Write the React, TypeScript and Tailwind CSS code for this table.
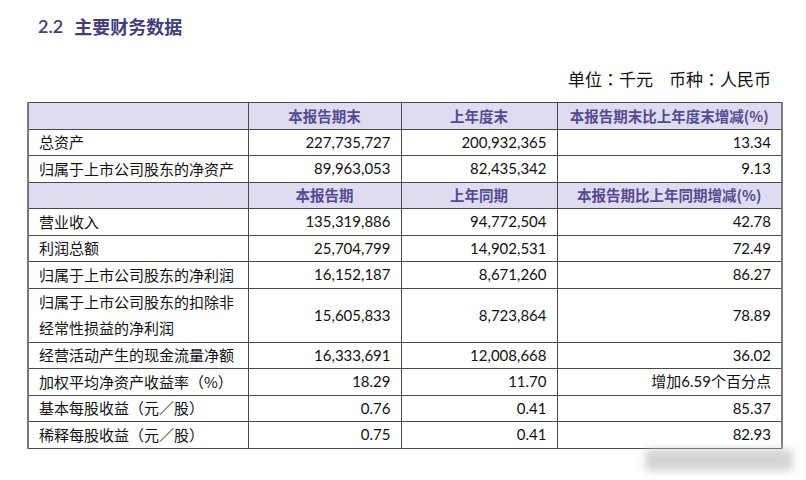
import React from 'react';

const CJK = '"Noto Sans CJK SC", sans-serif';
const CJK_TC = '"Noto Sans CJK TC", sans-serif';
const NUM = 'Lato, "Noto Sans CJK SC", sans-serif';

type Row = { label: string; a: string; b: string; c: string; tall?: boolean; lines?: string[] };

const headerA = ['本报告期末', '上年度末', '本报告期末比上年度末增减(%)'];
const headerB = ['本报告期', '上年同期', '本报告期比上年同期增减(%)'];

const balance: Row[] = [
  { label: '总资产', a: '227,735,727', b: '200,932,365', c: '13.34' },
  { label: '归属于上市公司股东的净资产', a: '89,963,053', b: '82,435,342', c: '9.13' },
];

const income: Row[] = [
  { label: '营业收入', a: '135,319,886', b: '94,772,504', c: '42.78' },
  { label: '利润总额', a: '25,704,799', b: '14,902,531', c: '72.49' },
  { label: '归属于上市公司股东的净利润', a: '16,152,187', b: '8,671,260', c: '86.27' },
  {
    label: '',
    lines: ['归属于上市公司股东的扣除非', '经常性损益的净利润'],
    a: '15,605,833',
    b: '8,723,864',
    c: '78.89',
    tall: true,
  },
  { label: '经营活动产生的现金流量净额', a: '16,333,691', b: '12,008,668', c: '36.02' },
  { label: '加权平均净资产收益率（%）', a: '18.29', b: '11.70', c: '增加6.59个百分点' },
  { label: '基本每股收益（元／股）', a: '0.76', b: '0.41', c: '85.37' },
  { label: '稀释每股收益（元／股）', a: '0.75', b: '0.41', c: '82.93' },
];

function HeaderRow({ cells }: { cells: string[] }) {
  return (
    <tr className="h-[26.5px] bg-[#dedcf0]">
      <td className="border border-[#4a4a4a]" />
      {cells.map((c) => (
        <td
          key={c}
          className="border border-[#4a4a4a] text-center text-[14.5px] font-bold leading-none text-[#564a92]"
        >
          {c}
        </td>
      ))}
    </tr>
  );
}

function DataRow({ row }: { row: Row }) {
  const num = 'border border-[#4a4a4a] pr-[10px] text-right text-[15px] leading-none text-[#111]';
  return (
    <tr className={row.tall ? 'h-[54px]' : 'h-[26.5px]'}>
      <td className="border border-[#4a4a4a] pl-[10px] text-[15px] text-[#111]">
        {row.lines ? (
          <div className="flex flex-col leading-[26px]">
            {row.lines.map((l) => (
              <span key={l}>{l}</span>
            ))}
          </div>
        ) : (
          <span className="leading-none">{row.label}</span>
        )}
      </td>
      <td className={num} style={{ fontFamily: NUM }}>
        {row.a}
      </td>
      <td className={num} style={{ fontFamily: NUM }}>
        {row.b}
      </td>
      <td className={num + ' pr-[8px]'} style={{ fontFamily: NUM }}>
        {row.c}
      </td>
    </tr>
  );
}

export default function App() {
  return (
    <div className="relative h-[480px] w-[806px] overflow-hidden bg-white" style={{ fontFamily: CJK }}>
      <div className="px-[27px]">
        <h2 className="flex gap-[11px] pl-[11px] pt-[13px] text-[18px] font-semibold leading-[26px] text-[#433d7c]">
          <span style={{ fontFamily: NUM }}>2.2</span>
          <span>主要财务数据</span>
        </h2>
        <div className="mt-[27px] flex justify-end gap-[16px] pr-[8px] text-[17px] leading-[26px] text-[#111]">
          <span>
            单位<span style={{ fontFamily: CJK_TC }}>：</span>千元
          </span>
          <span>
            币种<span style={{ fontFamily: CJK_TC }}>：</span>人民币
          </span>
        </div>
        <table className="mt-[10px] w-[754px] table-fixed border-collapse border-x-2 border-x-[#7a7a7a]">
          <colgroup>
            <col className="w-[220px]" />
            <col className="w-[153px]" />
            <col className="w-[156px]" />
            <col className="w-[225px]" />
          </colgroup>
          <tbody>
            <HeaderRow cells={headerA} />
            {balance.map((r) => (
              <DataRow key={r.label} row={r} />
            ))}
            <HeaderRow cells={headerB} />
            {income.map((r, i) => (
              <DataRow key={i} row={r} />
            ))}
          </tbody>
        </table>
      </div>
      {/* blurred watermark, bottom right */}
      <div className="absolute left-[645px] top-[449px] h-[22px] w-[148px] rounded-[6px] bg-[#c9c9c9] opacity-80 blur-[4px]" />
    </div>
  );
}
